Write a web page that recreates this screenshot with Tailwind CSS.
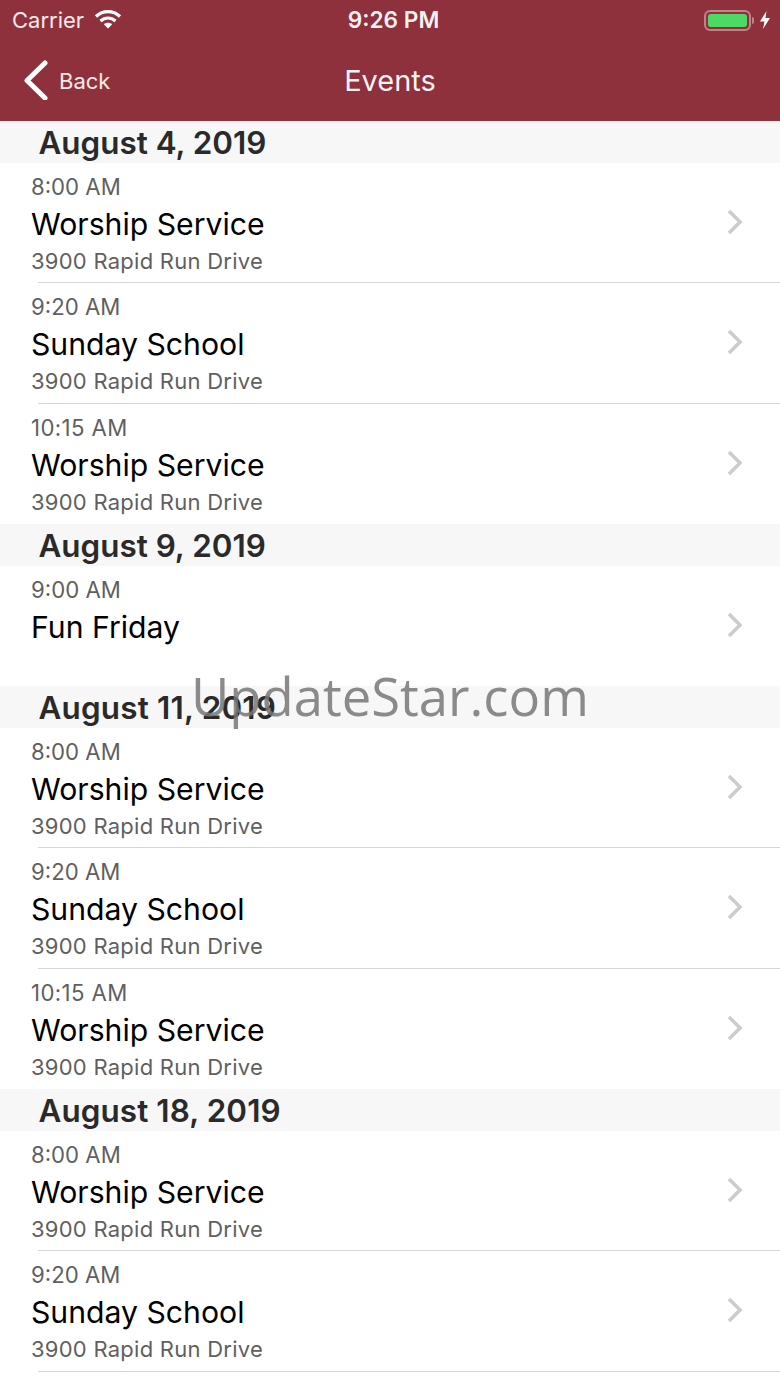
<!DOCTYPE html>
<html>
<head>
<meta charset="utf-8">
<title>Events</title>
<script src="https://cdn.jsdelivr.net/npm/@tailwindcss/browser@4"></script>
</head>
<body class="bg-white font-['Inter','Liberation_Sans',sans-serif] overflow-hidden">
<div class="relative w-[780px] h-[1387px] overflow-hidden">
  <!-- Nav bar -->
  <header class="h-[121px] bg-[#8f313c] text-white">
    <div class="h-[40px] pl-3 pr-[9px] flex items-center justify-between">
      <div class="flex items-center gap-[10px] w-[200px]">
        <span class="text-[22px] text-white/90">Carrier</span>
        <svg width="28" height="20" viewBox="0 0 28 20" fill="none" stroke="white" stroke-width="3.2" class="mb-[3px]">
          <path d="M2 7.500C9 1 19 1 26 7.500"/>
          <path d="M6.500 12C11 8 17 8 21.500 12"/>
          <path d="M14 19.500L9.800 15.200C12 13.200 16 13.200 18.200 15.200Z" fill="white" stroke="none"/>
        </svg>
      </div>
      <span class="text-[22.7px] font-semibold text-white/95 ml-[4px]">9:26 PM</span>
      <div class="w-[200px] flex items-center justify-end">
        <div class="w-[47px] h-[21px] rounded-[6px] border-2 border-white/40 p-[2px]">
          <div class="h-full rounded-[3px] bg-[#4cd964]"></div>
        </div>
        <div class="w-[2px] h-[7px] ml-[1px] rounded-r-full bg-white/40"></div>
        <svg width="12" height="20" viewBox="0 0 12 18" class="ml-[5px]"><path d="M7.500 0L1 10.500H5.500L4 18L11 7H6.500Z" fill="white"/></svg>
      </div>
    </div>
    <div class="relative h-[81px] flex items-center justify-center">
      <div class="absolute left-[24px] top-[20px] flex items-center gap-[11px]">
        <svg width="24" height="40" viewBox="0 0 24 40" fill="none" stroke="white" stroke-width="5" stroke-linecap="round" stroke-linejoin="round"><path d="M21 3L3 20.500L21 38"/></svg>
        <span class="text-[22px] text-white/90 mt-[2px]">Back</span>
      </div>
      <h1 class="text-[29px] font-normal text-white/95">Events</h1>
    </div>
  </header>

  <main>
    <h2 class="h-[41.500px] pl-[38.500px] bg-[#f7f7f7] text-[31.400px] leading-[44px] font-semibold text-[#2a2a2a]">August 4, 2019</h2>
    <a class="h-[120.500px] pl-[31px] pr-[37px] flex items-center justify-between relative">
      <div class="flex flex-col">
        <span class="text-[22.200px] leading-[30px] mt-[2px] text-[#5f5f5f]">8:00 AM</span>
        <span class="text-[30.200px] leading-[44px] text-black">Worship Service</span>
        <span class="text-[22px] leading-[30px] tracking-[0.25px] text-[#5f5f5f]">3900 Rapid Run Drive</span>
      </div>
      <svg class="mb-[2px]" width="16" height="26" viewBox="0 0 16 26" fill="none" stroke="#cbcbd0" stroke-width="3.500"><path d="M2 2L13 13L2 24"/></svg>
      <div class="absolute left-[38px] right-0 bottom-0 h-px bg-[#d6d6d6]"></div>
    </a>
    <a class="h-[120.500px] pl-[31px] pr-[37px] flex items-center justify-between relative">
      <div class="flex flex-col">
        <span class="text-[22.200px] leading-[30px] mt-[2px] text-[#5f5f5f]">9:20 AM</span>
        <span class="text-[30.200px] leading-[44px] text-black">Sunday School</span>
        <span class="text-[22px] leading-[30px] tracking-[0.25px] text-[#5f5f5f]">3900 Rapid Run Drive</span>
      </div>
      <svg class="mb-[2px]" width="16" height="26" viewBox="0 0 16 26" fill="none" stroke="#cbcbd0" stroke-width="3.500"><path d="M2 2L13 13L2 24"/></svg>
      <div class="absolute left-[38px] right-0 bottom-0 h-px bg-[#d6d6d6]"></div>
    </a>
    <a class="h-[120.500px] pl-[31px] pr-[37px] flex items-center justify-between relative">
      <div class="flex flex-col">
        <span class="text-[22.200px] leading-[30px] mt-[2px] tracking-[0.4px] text-[#5f5f5f]">10:15 AM</span>
        <span class="text-[30.200px] leading-[44px] text-black">Worship Service</span>
        <span class="text-[22px] leading-[30px] tracking-[0.25px] text-[#5f5f5f]">3900 Rapid Run Drive</span>
      </div>
      <svg class="mb-[2px]" width="16" height="26" viewBox="0 0 16 26" fill="none" stroke="#cbcbd0" stroke-width="3.500"><path d="M2 2L13 13L2 24"/></svg>
    </a>

    <h2 class="h-[41.500px] pl-[38.500px] bg-[#f7f7f7] text-[31.400px] leading-[44px] font-semibold text-[#2a2a2a]">August 9, 2019</h2>
    <a class="h-[120.500px] pl-[31px] pr-[37px] flex items-center justify-between relative">
      <div class="flex flex-col">
        <span class="text-[22.200px] leading-[30px] mt-[2px] text-[#5f5f5f]">9:00 AM</span>
        <span class="text-[30.200px] leading-[44px] text-black">Fun Friday</span>
        <span class="text-[22px] leading-[30px] text-[#5f5f5f]">&nbsp;</span>
      </div>
      <svg class="mb-[2px]" width="16" height="26" viewBox="0 0 16 26" fill="none" stroke="#cbcbd0" stroke-width="3.500"><path d="M2 2L13 13L2 24"/></svg>
    </a>

    <h2 class="h-[41.500px] pl-[38.500px] bg-[#f7f7f7] text-[31.400px] leading-[44px] tracking-[0.2px] font-semibold text-[#2a2a2a]">August 11, 2019</h2>
    <a class="h-[120.500px] pl-[31px] pr-[37px] flex items-center justify-between relative">
      <div class="flex flex-col">
        <span class="text-[22.200px] leading-[30px] mt-[2px] text-[#5f5f5f]">8:00 AM</span>
        <span class="text-[30.200px] leading-[44px] text-black">Worship Service</span>
        <span class="text-[22px] leading-[30px] tracking-[0.25px] text-[#5f5f5f]">3900 Rapid Run Drive</span>
      </div>
      <svg class="mb-[2px]" width="16" height="26" viewBox="0 0 16 26" fill="none" stroke="#cbcbd0" stroke-width="3.500"><path d="M2 2L13 13L2 24"/></svg>
      <div class="absolute left-[38px] right-0 bottom-0 h-px bg-[#d6d6d6]"></div>
    </a>
    <a class="h-[120.500px] pl-[31px] pr-[37px] flex items-center justify-between relative">
      <div class="flex flex-col">
        <span class="text-[22.200px] leading-[30px] mt-[2px] text-[#5f5f5f]">9:20 AM</span>
        <span class="text-[30.200px] leading-[44px] text-black">Sunday School</span>
        <span class="text-[22px] leading-[30px] tracking-[0.25px] text-[#5f5f5f]">3900 Rapid Run Drive</span>
      </div>
      <svg class="mb-[2px]" width="16" height="26" viewBox="0 0 16 26" fill="none" stroke="#cbcbd0" stroke-width="3.500"><path d="M2 2L13 13L2 24"/></svg>
      <div class="absolute left-[38px] right-0 bottom-0 h-px bg-[#d6d6d6]"></div>
    </a>
    <a class="h-[120.500px] pl-[31px] pr-[37px] flex items-center justify-between relative">
      <div class="flex flex-col">
        <span class="text-[22.200px] leading-[30px] mt-[2px] tracking-[0.4px] text-[#5f5f5f]">10:15 AM</span>
        <span class="text-[30.200px] leading-[44px] text-black">Worship Service</span>
        <span class="text-[22px] leading-[30px] tracking-[0.25px] text-[#5f5f5f]">3900 Rapid Run Drive</span>
      </div>
      <svg class="mb-[2px]" width="16" height="26" viewBox="0 0 16 26" fill="none" stroke="#cbcbd0" stroke-width="3.500"><path d="M2 2L13 13L2 24"/></svg>
    </a>

    <h2 class="h-[41.500px] pl-[38.500px] bg-[#f7f7f7] text-[31.400px] leading-[44px] tracking-[0.1px] font-semibold text-[#2a2a2a]">August 18, 2019</h2>
    <a class="h-[120.500px] pl-[31px] pr-[37px] flex items-center justify-between relative">
      <div class="flex flex-col">
        <span class="text-[22.200px] leading-[30px] mt-[2px] text-[#5f5f5f]">8:00 AM</span>
        <span class="text-[30.200px] leading-[44px] text-black">Worship Service</span>
        <span class="text-[22px] leading-[30px] tracking-[0.25px] text-[#5f5f5f]">3900 Rapid Run Drive</span>
      </div>
      <svg class="mb-[2px]" width="16" height="26" viewBox="0 0 16 26" fill="none" stroke="#cbcbd0" stroke-width="3.500"><path d="M2 2L13 13L2 24"/></svg>
      <div class="absolute left-[38px] right-0 bottom-0 h-px bg-[#d6d6d6]"></div>
    </a>
    <a class="h-[120.500px] pl-[31px] pr-[37px] flex items-center justify-between relative">
      <div class="flex flex-col">
        <span class="text-[22.200px] leading-[30px] mt-[2px] text-[#5f5f5f]">9:20 AM</span>
        <span class="text-[30.200px] leading-[44px] text-black">Sunday School</span>
        <span class="text-[22px] leading-[30px] tracking-[0.25px] text-[#5f5f5f]">3900 Rapid Run Drive</span>
      </div>
      <svg class="mb-[2px]" width="16" height="26" viewBox="0 0 16 26" fill="none" stroke="#cbcbd0" stroke-width="3.500"><path d="M2 2L13 13L2 24"/></svg>
      <div class="absolute left-[38px] right-0 bottom-0 h-px bg-[#d6d6d6]"></div>
    </a>
  </main>

  <!-- Watermark -->
  <div class="absolute left-[191px] top-[660px] text-[52.600px] leading-[72px] font-['Open_Sans',sans-serif] text-[#777777]/85 pointer-events-none">UpdateStar.com</div>
</div>
</body>
</html>
